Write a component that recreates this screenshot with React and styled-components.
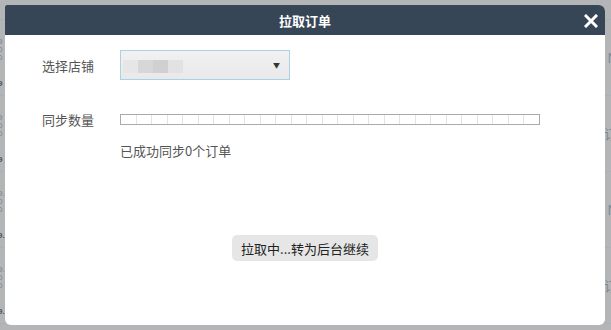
import React from 'react'
import styled, { createGlobalStyle } from 'styled-components'

const GlobalStyle = createGlobalStyle`
    html, body {
        margin: 0;
        padding: 0;
        background: #b3b5b7;
        font-family: "Noto Sans CJK SC", "Noto Sans", sans-serif;
        overflow: hidden;
    }
`

const Screen = styled.div`
    position: relative;
    width: 611px;
    height: 330px;
    overflow: hidden;
`

const Page = styled.div`
    margin-top: -56px;
    display: flex;
    flex-direction: column;
`

const PageRow = styled.div`
    height: 75px;
    border-bottom: 1px solid #a6b2bc;
    display: flex;
    justify-content: space-between;
    align-items: stretch;
`

const NumCol = styled.div`
    margin-left: -2px;
    padding-top: 8px;
    display: flex;
    flex-direction: column;
    font-family: "Liberation Sans", sans-serif;
    font-size: 8px;
    line-height: 8px;
`

const Num = styled.span`
    font-weight: ${props => (props.bold ? 'bold' : 'normal')};
    color: ${props => (props.bold ? '#4d5861' : '#7d858c')};
    margin-top: ${props => props.gap || 0}px;
`

const SideText = styled.div`
    margin-right: -6px;
    display: flex;
    align-items: center;
    font-size: 13px;
    color: #7b8893;
`

const Dialog = styled.div`
    position: absolute;
    left: 5px;
    top: 5px;
    width: 600px;
    height: 320px;
    background: #fff;
    border-radius: 2px 6px 6px 6px;
    overflow: hidden;
    display: flex;
    flex-direction: column;
`

const Header = styled.div`
    position: relative;
    height: 30px;
    background: #364656;
    display: flex;
    align-items: center;
    justify-content: center;
    color: #fff;
    font-size: 13px;
    font-weight: bold;
`

const Close = styled.svg`
    position: absolute;
    right: 7px;
    top: 9px;
`

const Body = styled.div`
    padding: 15px 0 0 37px;
    display: flex;
    flex-direction: column;
`

const FieldRow = styled.div`
    display: flex;
    align-items: center;
    height: ${props => props.h}px;
    margin-top: ${props => props.mt || 0}px;
`

const Label = styled.div`
    width: 78px;
    font-size: 13px;
    color: #555;
`

const Select = styled.div`
    width: 170px;
    height: 30px;
    box-sizing: border-box;
    border: 1px solid #a9d1ea;
    background: linear-gradient(#f1f1f1, #e9e9e9);
    display: flex;
    align-items: center;
    justify-content: space-between;
    padding: 0 9px 0 2px;
`

const Mosaic = styled.div`
    display: flex;
    margin-top: 2px;
`

const Tile = styled.span`
    width: 15px;
    height: 13px;
    background: ${props => props.c};
`

const Arrow = styled.span`
    font-size: 7px;
    color: #333;
    margin-top: -1px;
`

const Bar = styled.div`
    width: 418px;
    height: 9px;
    border: 1px solid #aaa;
    display: flex;
`

const Segment = styled.div`
    flex: 1;
    border-left: 1px solid #e3e3e3;
    &:first-child {
        border-left: none;
    }
`

const Message = styled.div`
    margin: 12px 0 0 78px;
    font-size: 13px;
    line-height: 20px;
    color: #555;
`

const Footer = styled.div`
    display: flex;
    justify-content: center;
    margin-top: 74px;
`

const Button = styled.button`
    width: 146px;
    height: 26px;
    border: none;
    border-radius: 5px;
    background: #e6e6e6;
    color: #222;
    font-family: inherit;
    font-size: 13px;
    padding: 0;
`

const rows = [
    { nums: [['9', 0], ['0', 0], ['0', 0], ['9', 18, true]], side: '订' },
    { nums: [['9', 10], ['0', 0], ['0', 0], ['9', 18, true]], side: 'N' },
    { nums: [['9', 10], ['0', 0], ['0', 0], ['9', 18, true]], side: '订' },
    { nums: [['9.', 10], ['0', 0], ['0', 0], ['9.', 18, true]], side: 'N' },
    { nums: [['9.', 10], ['0', 0], ['0', 0], ['9.', 18, true]], side: '订' },
]

function App() {
    const segments = Array.from({ length: 27 })

    return (
        <Screen>
            <GlobalStyle />
            <Page>
                {rows.map((row, i) => (
                    <PageRow key={i}>
                        <NumCol>
                            {row.nums.map(([t, gap, bold], j) => (
                                <Num key={j} gap={gap} bold={bold}>{t}</Num>
                            ))}
                        </NumCol>
                        <SideText>{row.side}</SideText>
                    </PageRow>
                ))}
            </Page>
            <Dialog>
                <Header>
                    拉取订单
                    <Close width="14" height="14" viewBox="0 0 14 14">
                        <path d="M2 2 L12 12 M12 2 L2 12" stroke="#fff" strokeWidth="3" strokeLinecap="square" />
                    </Close>
                </Header>
                <Body>
                    <FieldRow h={30}>
                        <Label>选择店铺</Label>
                        <Select>
                            <Mosaic>
                                <Tile c="#e6e6e6" />
                                <Tile c="#d7d7d7" />
                                <Tile c="#d1cfcf" />
                                <Tile c="#e2e2e2" />
                            </Mosaic>
                            <Arrow>▼</Arrow>
                        </Select>
                    </FieldRow>
                    <FieldRow h={20} mt={29}>
                        <Label>同步数量</Label>
                        <Bar>
                            {segments.map((_, i) => (
                                <Segment key={i} />
                            ))}
                        </Bar>
                    </FieldRow>
                    <Message>已成功同步0个订单</Message>
                </Body>
                <Footer>
                    <Button>拉取中...转为后台继续</Button>
                </Footer>
            </Dialog>
        </Screen>
    )
}

export default App
